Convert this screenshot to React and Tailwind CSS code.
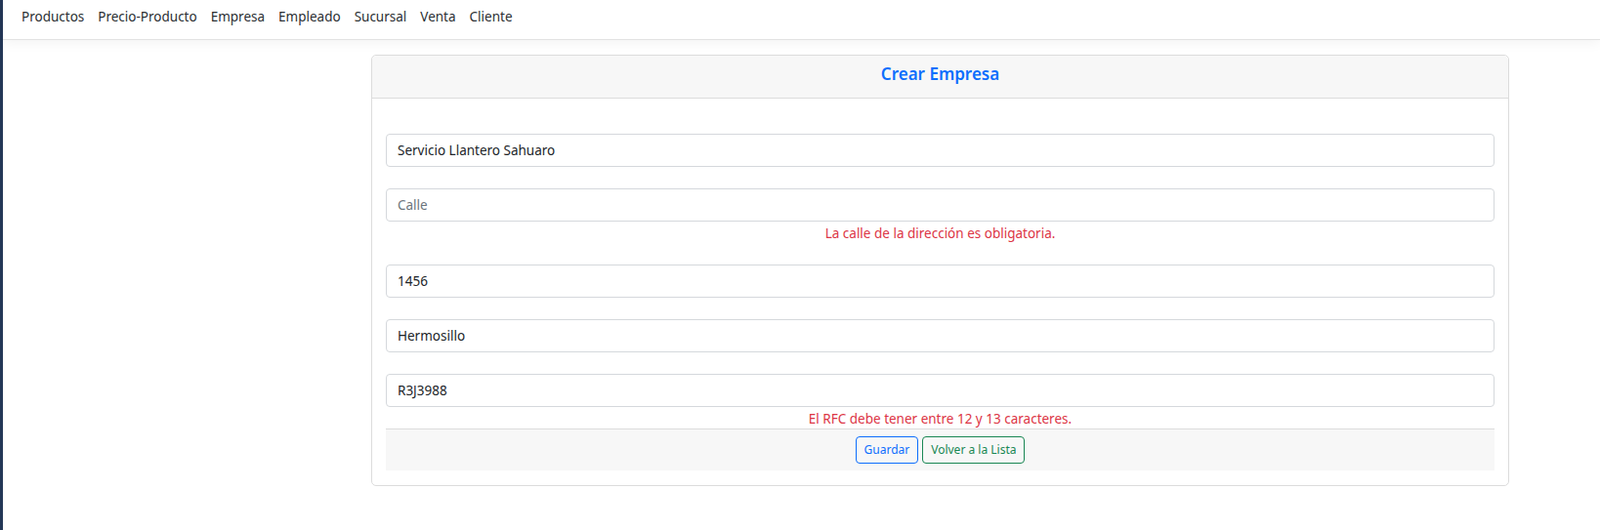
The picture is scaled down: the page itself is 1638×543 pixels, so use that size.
export default function App() {
  const font = { fontFamily: '"Noto Sans", "Open Sans", sans-serif' };

  const links = ["Productos", "Precio-Producto", "Empresa", "Empleado", "Sucursal", "Venta", "Cliente"];

  return (
    <div className="flex min-h-[543px] bg-white text-[#212529]" style={font}>
      {/* barra lateral */}
      <div className="w-[3px] shrink-0 bg-[#243757]" />
      <div className="flex-1">
        <nav className="h-[41px] bg-white border-b border-[#e2e2e2] shadow-[0_3px_12px_rgba(0,0,0,0.05)] flex items-center pl-[12px] pb-[6px]">
          {links.map((l) => (
            <a key={l} className="px-[7px] text-[13.5px] text-[#2b2f33] cursor-pointer">
              {l}
            </a>
          ))}
        </nav>

        <div className="pl-[377px] pt-[15px]">
          <div className="w-[1165px] border border-[#dcdcdc] rounded-[5px] bg-white">
            <div className="h-[44px] bg-[#f7f7f7] border-b border-[#dcdcdc] rounded-t-[5px] flex items-center justify-center pb-[6px]">
              <h5 className="text-[17px] font-semibold text-[#0d6efd]">Crear Empresa</h5>
            </div>

            <div className="px-[14px] pt-[36px] pb-[15px]">
              <form>
                <div className="mb-[22px]">
                  <input
                    className="w-full h-[34px] border border-[#d5d8dc] rounded-[4px] px-[11px] text-[13.5px] text-[#212529] outline-none"
                    defaultValue="Servicio Llantero Sahuaro"
                  />
                </div>

                <div className="mb-[22px]">
                  <input
                    className="w-full h-[34px] border border-[#d5d8dc] rounded-[4px] px-[11px] text-[13.5px] text-[#212529] placeholder:text-[#6c757d] outline-none"
                    placeholder="Calle"
                  />
                  <div className="mt-[3px] h-[19px] leading-[19px] text-center text-[13.5px] text-[#dc3545]">
                    La calle de la dirección es obligatoria.
                  </div>
                </div>

                <div className="mb-[22px]">
                  <input
                    className="w-full h-[34px] border border-[#d5d8dc] rounded-[4px] px-[11px] text-[13.5px] text-[#212529] outline-none"
                    defaultValue="1456"
                  />
                </div>

                <div className="mb-[22px]">
                  <input
                    className="w-full h-[34px] border border-[#d5d8dc] rounded-[4px] px-[11px] text-[13.5px] text-[#212529] outline-none"
                    defaultValue="Hermosillo"
                  />
                </div>

                <div>
                  <input
                    className="w-full h-[34px] border border-[#d5d8dc] rounded-[4px] px-[11px] text-[13.5px] text-[#212529] outline-none"
                    defaultValue="R3J3988"
                  />
                  <div className="mt-[3px] h-[19px] leading-[19px] text-center text-[13.5px] text-[#dc3545]">
                    El RFC debe tener entre 12 y 13 caracteres.
                  </div>
                </div>

                <div className="h-[43px] bg-[#f7f7f7] border-t border-[#dcdcdc] flex items-center justify-center gap-[4px]">
                  <button
                    type="button"
                    className="h-[28px] px-[8px] border border-[#0d6efd] rounded-[4px] text-[12px] text-[#0d6efd] bg-transparent"
                  >
                    Guardar
                  </button>
                  <button
                    type="button"
                    className="h-[28px] px-[8px] border border-[#198754] rounded-[4px] text-[12px] text-[#198754] bg-transparent"
                  >
                    Volver a la Lista
                  </button>
                </div>
              </form>
            </div>
          </div>
        </div>
      </div>
    </div>
  );
}
